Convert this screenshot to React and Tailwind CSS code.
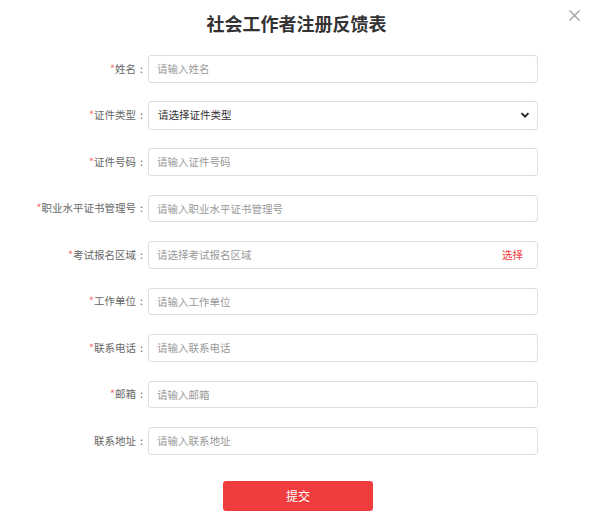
import React from "react";

const fields = [
  { label: "姓名", required: true, placeholder: "请输入姓名" },
  { label: "证件类型", required: true, type: "select", placeholder: "请选择证件类型" },
  { label: "证件号码", required: true, placeholder: "请输入证件号码" },
  { label: "职业水平证书管理号", required: true, placeholder: "请输入职业水平证书管理号" },
  { label: "考试报名区域", required: true, type: "pick", placeholder: "请选择考试报名区域" },
  { label: "工作单位", required: true, placeholder: "请输入工作单位" },
  { label: "联系电话", required: true, placeholder: "请输入联系电话" },
  { label: "邮箱", required: true, placeholder: "请输入邮箱" },
  { label: "联系地址", required: false, placeholder: "请输入联系地址" },
];

function Field({ field }) {
  const boxClass =
    "w-[390px] h-[27.5px] rounded-[3px] border border-[#dcdfe6] bg-white px-[8px] text-[10.5px] outline-none";

  return (
    <div className="flex items-center h-[27.5px]">
      <label className="w-[148px] pr-[1px] flex justify-end items-center text-[10.5px] text-[#666] whitespace-nowrap">
        {field.required && <span className="text-[#f56c6c]">*</span>}
        <span>{field.label}</span>
        <span className="w-[11px] text-center">:</span>
      </label>
      {field.type === "select" ? (
        <div className={`${boxClass} flex items-center justify-between h-[28.5px] text-[#333]`}>
          <span className="pl-[1px]">{field.placeholder}</span>
          <svg width="10" height="10" viewBox="0 0 10 10" className="mr-[-1px]">
            <path d="M1.5 3.2 L5 6.7 L8.5 3.2" fill="none" stroke="#222" strokeWidth="1.8" />
          </svg>
        </div>
      ) : field.type === "pick" ? (
        <div className={`${boxClass} flex items-center justify-between`}>
          <span className="text-[#999]">{field.placeholder}</span>
          <span className="text-[#f03a3a] pr-[6px]">选择</span>
        </div>
      ) : (
        <input
          className={`${boxClass} text-[#333] placeholder:text-[#999]`}
          placeholder={field.placeholder}
        />
      )}
    </div>
  );
}

export default function App() {
  return (
    <div
      className="relative w-[593px] h-[531px] bg-white"
      style={{ fontFamily: '"Microsoft YaHei", "Noto Sans CJK SC", sans-serif' }}
    >
      <button className="absolute right-[13px] top-[10px] text-[#999]" aria-label="关闭">
        <svg width="11" height="11" viewBox="0 0 11 11">
          <path d="M0.5 0.5 L10.5 10.5 M10.5 0.5 L0.5 10.5" stroke="#a0a0a0" strokeWidth="1.3" />
        </svg>
      </button>

      <h1 className="pt-[10px] text-center text-[18px] leading-[26px] font-bold text-[#333]">
        社会工作者注册反馈表
      </h1>

      <form className="mt-[19px] flex flex-col gap-[19px]">
        {fields.map((f) => (
          <Field key={f.label} field={f} />
        ))}
      </form>

      <div className="mt-[26px] flex justify-center pl-[3px]">
        <button className="w-[150px] h-[30px] rounded-[3px] bg-[#ef3d3d] text-white text-[12px]">
          提交
        </button>
      </div>
    </div>
  );
}
